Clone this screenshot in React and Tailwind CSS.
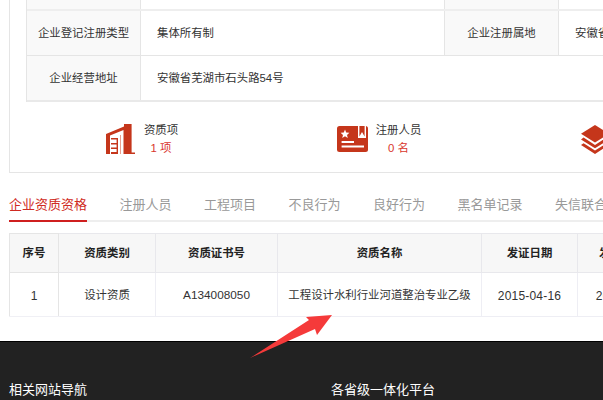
const FONT = "font-['Liberation_Sans','Noto_Sans_CJK_SC',sans-serif]";

const tabs = ["企业资质资格", "注册人员", "工程项目", "不良行为", "良好行为", "黑名单记录", "失信联合惩戒"];

const BuildingIcon = () => (
  <svg width="30" height="30" viewBox="0 0 30 30" className="shrink-0">
    <path fill="#c5361b" d="M0 10 L18 2.6 V0 H25.6 V28.6 H29 V30 H17.5 V6 L4 11.5 V30 H0 Z" />
    <path fill="#c5361b" d="M5 14 H12 V30 H5 V28 H10.6 V25 H5 V23.5 H10.6 V20.5 H5 V19 H10.6 V15.6 H5 Z" />
    <path fill="#e8a08f" d="M14 11 H15 V30 H14 Z" />
  </svg>
);

const CardIcon = () => (
  <svg width="31" height="26" viewBox="0 0 31 26" className="shrink-0">
    <rect x="0" y="0" width="31" height="26" rx="2.5" fill="#c5361b" />
    <path fill="#fff" d="M8 3.6 L9.2 6.6 L12.4 6.8 L10 8.9 L10.8 12 L8 10.3 L5.2 12 L6 8.9 L3.6 6.8 L6.8 6.6 Z" />
    <path fill="#fff" d="M4.6 15 H17 V17 H4.6 Z M4.6 19.4 H27 V21.4 H4.6 Z" />
    <path fill="#fff" d="M21 0 H22.4 V10.5 L25 6 L27.6 10.5 V0 H29 V12 H21 Z" />
  </svg>
);

const StackIcon = () => (
  <svg width="28" height="29" viewBox="0 0 28 29" className="shrink-0">
    <path fill="#c5361b" d="M14 0 L28 8.8 L14 17.6 L0 8.8 Z" />
    <path fill="#c5361b" d="M2.6 12.6 L14 20 L25.4 12.6 L28 14.4 L14 23.2 L0 14.4 Z" />
    <path fill="#c5361b" d="M2.6 18.2 L14 25.6 L25.4 18.2 L28 20 L14 29 L0 20 Z" />
  </svg>
);

const Stat = ({ icon, label, value }) => (
  <div className="flex items-center justify-center gap-[8px]">
    {icon}
    <div className="text-center leading-[18px]">
      <div className="text-[#333]">{label}</div>
      <div className="text-[#d9362c]">{value}</div>
    </div>
  </div>
);

const App = () => {
  return (
    <div className={`relative h-[400px] w-[603px] overflow-hidden bg-white text-[11.4px] text-[#333] ${FONT}`}>
      <div className="ml-[9px] h-[173px] w-[760px] border-b border-l border-[#e5e5e5] pl-[16px]">
        <div className="border-l border-[#e5e5e5]">
          <div className="grid h-[9px] grid-cols-[114px_303px_115px_1fr]">
            <div className="border-r border-[#e5e5e5] bg-[#f9f9f9]" />
            <div />
            <div className="border-x border-[#e5e5e5] bg-[#f9f9f9]" />
            <div />
          </div>
          <div className="grid h-[47px] grid-cols-[114px_303px_115px_1fr] items-stretch border-b border-t-2 border-b-[#e5e5e5] border-t-[#eeeeee]">
            <div className="flex items-center justify-center border-r border-[#e5e5e5] bg-[#f9f9f9] pt-[2px]">企业登记注册类型</div>
            <div className="flex items-center pl-[16px] pt-[2px]">集体所有制</div>
            <div className="flex items-center justify-center border-x border-[#e5e5e5] bg-[#f9f9f9] pt-[2px]">企业注册属地</div>
            <div className="flex items-center pl-[16px] pt-[2px]">安徽省芜湖市</div>
          </div>
          <div className="grid h-[46px] grid-cols-[114px_1fr] border-b-2 border-[#e9e9e9]">
            <div className="flex items-center justify-center border-r border-[#e5e5e5] bg-[#f9f9f9] pt-[2px]">企业经营地址</div>
            <div className="flex items-center pl-[16px] pt-[2px]">安徽省芜湖市石头路54号</div>
          </div>
        </div>
        <div className="-ml-[3px] grid h-[69px] grid-cols-[238px_236px_238px] items-center pt-[5px]">
          <Stat icon={<BuildingIcon />} label="资质项" value="1 项" />
          <Stat icon={<CardIcon />} label="注册人员" value="0 名" />
          <Stat icon={<StackIcon />} label="工程项" value="0 项" />
        </div>
      </div>

      <div className="ml-[9px] mt-[22px] flex h-[27px] w-[760px] gap-[32.5px] border-b-2 border-[#eeeeee] text-[13px] leading-[20px] text-[#999]">
        {tabs.map((t, i) => (
          <div key={t} className={i === 0 ? "h-[27px] border-b-2 border-[#cf1f1f] text-[#cf2a22]" : ""}>
            {t}
          </div>
        ))}
      </div>

      <table className="ml-[9px] mt-[11px] w-[668px] table-fixed border-collapse text-center">
        <thead>
          <tr className="h-[39px] bg-[#f7f7f7] font-bold text-[#222]">
            <th className="w-[49px] border border-[#e5e5e5] pt-[2px]">序号</th>
            <th className="w-[97px] border border-[#e8e8ec] pt-[2px]">资质类别</th>
            <th className="w-[122px] border border-[#e8e8ec] pt-[2px]">资质证书号</th>
            <th className="w-[204px] border border-[#e8e8ec] pt-[2px]">资质名称</th>
            <th className="w-[96px] border border-[#e8e8ec] pt-[2px]">发证日期</th>
            <th className="w-[100px] border border-[#e8e8ec] pt-[2px]">发证有效期</th>
          </tr>
        </thead>
        <tbody>
          <tr className="h-[44px]">
            <td className="border border-[#e5e5e5] border-b-[#f0f0f5] pt-[2px] text-[12px]">1</td>
            <td className="border border-[#eeeef4] pt-[2px]">设计资质</td>
            <td className="border border-[#eeeef4] pt-[2px] text-[11.8px]">A134008050</td>
            <td className="border border-[#eeeef4] pt-[2px]">工程设计水利行业河道整治专业乙级</td>
            <td className="border border-[#eeeef4] pt-[2px] text-[12px] tracking-[0.2px]">2015-04-16</td>
            <td className="border border-[#eeeef4] pt-[2px] text-[12px] tracking-[0.2px]">2020-04-15</td>
          </tr>
        </tbody>
      </table>

      <div className="mt-[24px] h-[60px] border-t border-black bg-[#222222] pl-[9px] pt-[38px] text-[13px] leading-[20px] text-white">
        <div className="flex">
          <div className="w-[322px]">相关网站导航</div>
          <div>各省级一体化平台</div>
        </div>
      </div>

      {/* red annotation arrow drawn over the page */}
      <svg className="absolute left-[245px] top-[310px]" width="95" height="52" viewBox="245 310 95 52">
        <path fill="#f53a3a" d="M332 315 L306 317 L309 320 L250 358 L315 329 L317 335 Z" />
      </svg>
    </div>
  );
};

export default App;
